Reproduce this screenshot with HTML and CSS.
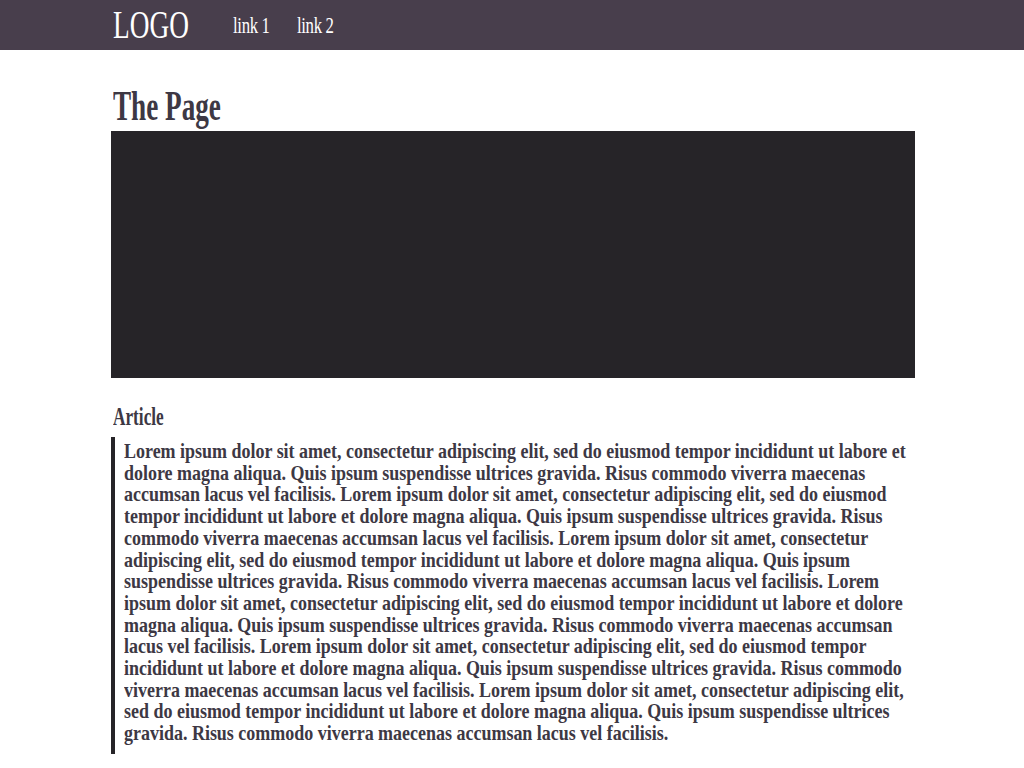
FILE: index.html
```html
<!DOCTYPE html>
<html lang="en">
<head>
<meta charset="utf-8">
<title>The Page</title>
<link rel="stylesheet" href="styles.css">
</head>
<body>
<header class="topbar">
  <div class="wrap">
    <div class="bar-inner">
      <a class="logo" href="#">LOGO</a>
      <nav class="nav">
        <a class="nav-link" href="#">link 1</a>
        <a class="nav-link" href="#">link 2</a>
      </nav>
    </div>
  </div>
</header>
<main class="wrap">
  <h1 class="title"><span class="squeeze">The Page</span></h1>
  <div class="hero"></div>
  <h2 class="section-title"><span class="squeeze">Article</span></h2>
  <blockquote class="quote">
    <p class="quote-text">Lorem ipsum dolor sit amet, consectetur adipiscing elit, sed do eiusmod tempor incididunt ut labore et dolore magna aliqua. Quis ipsum suspendisse ultrices gravida. Risus commodo viverra maecenas accumsan lacus vel facilisis. Lorem ipsum dolor sit amet, consectetur adipiscing elit, sed do eiusmod tempor incididunt ut labore et dolore magna aliqua. Quis ipsum suspendisse ultrices gravida. Risus commodo viverra maecenas accumsan lacus vel facilisis. Lorem ipsum dolor sit amet, consectetur adipiscing elit, sed do eiusmod tempor incididunt ut labore et dolore magna aliqua. Quis ipsum suspendisse ultrices gravida. Risus commodo viverra maecenas accumsan lacus vel facilisis. Lorem ipsum dolor sit amet, consectetur adipiscing elit, sed do eiusmod tempor incididunt ut labore et dolore magna aliqua. Quis ipsum suspendisse ultrices gravida. Risus commodo viverra maecenas accumsan lacus vel facilisis. Lorem ipsum dolor sit amet, consectetur adipiscing elit, sed do eiusmod tempor incididunt ut labore et dolore magna aliqua. Quis ipsum suspendisse ultrices gravida. Risus commodo viverra maecenas accumsan lacus vel facilisis. Lorem ipsum dolor sit amet, consectetur adipiscing elit, sed do eiusmod tempor incididunt ut labore et dolore magna aliqua. Quis ipsum suspendisse ultrices gravida. Risus commodo viverra maecenas accumsan lacus vel facilisis.</p>
  </blockquote>
</main>
</body>
</html>
```

FILE: styles.css
```css
* { box-sizing: border-box; }

html, body {
  margin: 0;
  padding: 0;
  background: #ffffff;
  overflow: hidden;
}

body {
  font-family: "Liberation Serif", "Times New Roman", serif;
  color: #3d3844;
}

.wrap {
  width: 806px;
  margin: 0 auto;
  padding-left: 2px;
}

/* Header */
.topbar {
  background: #483e4c;
  height: 50px;
}

.bar-inner {
  display: flex;
  align-items: flex-start;
  height: 50px;
  padding-left: 3px;
  transform: scaleX(0.7);
  transform-origin: left center;
}

.logo {
  font-size: 39px;
  line-height: 50px;
  color: #ffffff;
  text-decoration: none;
}

.nav {
  display: flex;
  gap: 39px;
  margin-left: 63px;
}

.nav-link {
  font-size: 24px;
  line-height: 50px;
  letter-spacing: -0.5px;
  color: #ffffff;
  text-decoration: none;
}

/* Condensed text helper */
.squeeze {
  display: inline-block;
  transform-origin: left center;
}

.title {
  margin: 35px 0 4px;
  padding-left: 2px;
  font-size: 42px;
  line-height: 42px;
  font-weight: bold;
}

.title .squeeze { transform: scaleX(0.647); }

.hero {
  height: 247px;
  background: #262428;
}

.section-title {
  margin: 26px 0 8px;
  padding-left: 2px;
  font-size: 25px;
  line-height: 25px;
  font-weight: bold;
}

.section-title .squeeze { transform: scaleX(0.69); }

.quote {
  margin: 0;
  padding: 3px 0 10px 9px;
  border-left: 4px solid #262428;
}

.quote-text {
  margin: 0;
  width: 968px;
  font-size: 22px;
  line-height: 21.7px;
  font-weight: bold;
  transform: scaleX(0.817);
  transform-origin: left top;
}
```
